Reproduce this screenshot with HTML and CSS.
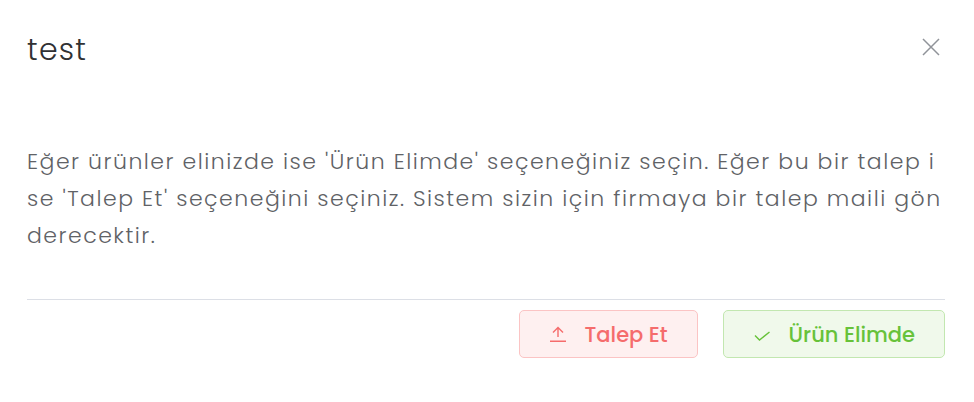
FILE: index.html
```html
<!DOCTYPE html>
<html lang="tr">

<head>
    <meta charset="UTF-8">
    <meta name="viewport" content="width=device-width, initial-scale=1.0">
    <title>test</title>
    <link rel="stylesheet" href="styles.css">
</head>

<body>
    <div class="dialog">
        <div class="dialog-header">
            <span class="dialog-title">test</span>
            <button class="dialog-close" aria-label="Kapat">
                <svg width="18" height="18" viewBox="0 0 18 18">
                    <path d="M1 1L17 17M17 1L1 17" stroke="#909399" stroke-width="1.5" fill="none"/>
                </svg>
            </button>
        </div>

        <div class="dialog-body">
            Eğer ürünler elinizde ise 'Ürün Elimde' seçeneğiniz seçin. Eğer bu bir talep ise 'Talep Et' seçeneğini seçiniz. Sistem sizin için firmaya bir talep maili gönderecektir.
        </div>

        <div class="dialog-footer">
            <button class="btn btn-danger">
                <svg width="16" height="16" viewBox="0 0 16 16">
                    <path d="M8 1.5V11M3 6.5L8 1.5L13 6.5M0 15.3H16" stroke="currentColor" stroke-width="1.4" fill="none"/>
                </svg>
                <span>Talep Et</span>
            </button>
            <button class="btn btn-success">
                <svg width="16" height="16" viewBox="0 0 16 16">
                    <path d="M1 9.5L5.5 14L15.5 6" stroke="currentColor" stroke-width="1.4" fill="none"/>
                </svg>
                <span>Ürün Elimde</span>
            </button>
        </div>
    </div>
</body>

</html>
```

FILE: styles.css
```css
body {
    margin: 0;
    background-color: #fff;
    font-family: Poppins, "Open Sans", sans-serif;
}

.dialog {
    padding: 0 29px 0 27px;
}

.dialog-header {
    display: flex;
    align-items: center;
    justify-content: space-between;
    padding-top: 30px;
    height: 40px;
}

.dialog-title {
    font-size: 30px;
    font-weight: 300;
    line-height: 40px;
    letter-spacing: 1.2px;
    color: #303133;
}

.dialog-close {
    background: none;
    border: none;
    padding: 0;
    margin: 0 5px 6px 0;
    display: flex;
    cursor: pointer;
}

.dialog-body {
    padding: 73px 0 45px;
    font-size: 22px;
    font-weight: 300;
    line-height: 37px;
    letter-spacing: 1.5px;
    color: #606266;
    word-break: break-all;
}

.dialog-footer {
    border-top: 1px solid #dcdfe6;
    padding-top: 10px;
    display: flex;
    justify-content: flex-end;
    gap: 25px;
}

.btn {
    display: flex;
    align-items: center;
    gap: 19px;
    height: 48px;
    padding: 0 29px 0 30px;
    border-radius: 5px;
    border: 1px solid;
    font-family: inherit;
    font-size: 21px;
    font-weight: 500;
    cursor: pointer;
}

.btn-danger {
    background-color: #fef0f0;
    border-color: #fbc4c4;
    color: #f56c6c;
}

.btn-success {
    background-color: #f0f9eb;
    border-color: #c2e7b0;
    color: #67c23a;
}
```
